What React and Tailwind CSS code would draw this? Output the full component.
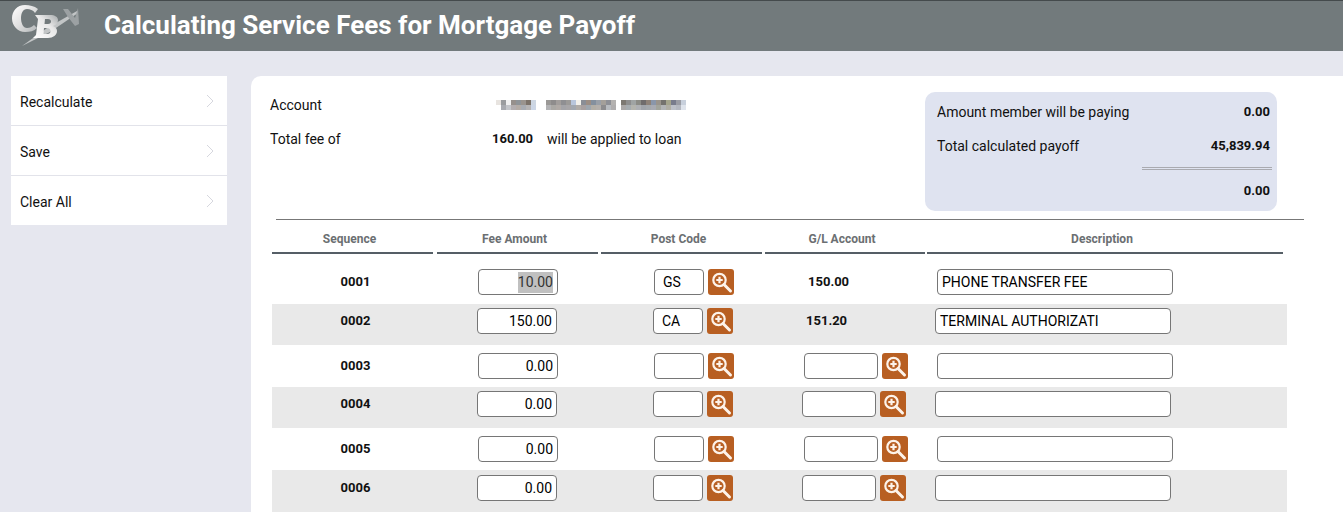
import React from 'react'

const menuItems = ['Recalculate', 'Save', 'Clear All']

const columns = [
    { label: 'Sequence', className: 'w-[161px] mr-[4px]' },
    { label: 'Fee Amount', className: 'w-[161px] mr-[3px]' },
    { label: 'Post Code', className: 'w-[161px] mr-[3px]' },
    { label: 'G/L Account', className: 'w-[160px] mr-[2px]' },
    { label: 'Description', className: 'w-[356px]' },
]

const rows = [
    { seq: '0001', fee: '10.00', code: 'GS', gl: '150.00', desc: 'PHONE TRANSFER FEE', selected: true },
    { seq: '0002', fee: '150.00', code: 'CA', gl: '151.20', desc: 'TERMINAL AUTHORIZATI' },
    { seq: '0003', fee: '0.00', code: '', gl: '', desc: '' },
    { seq: '0004', fee: '0.00', code: '', gl: '', desc: '' },
    { seq: '0005', fee: '0.00', code: '', gl: '', desc: '' },
    { seq: '0006', fee: '0.00', code: '', gl: '', desc: '' },
]

const rowStyles = [
    'h-[50px] pt-[15px]',
    'h-[41px] pt-[4px] bg-[#e9e9e9]',
    'h-[42px] pt-[8px]',
    'h-[41px] pt-[4px] bg-[#e9e9e9]',
    'h-[42px] pt-[8px]',
    'h-[42px] pt-[5px] bg-[#e9e9e9]',
]

// redacted account number, two rows of blurred blocks
const mosaicShort = [
    ['#e8e4e0', '#9a9c9e', '#f0f0f0', '#96908c', '#8f9498', '#9a948e', '#7c736a', '#cdd6e2'],
    ['#ffffff', '#a9abb0', '#c4c6ca', '#b3aeb0', '#b4aca6', '#a8acb2', '#b6b4b4', '#ccd6e6'],
]

const mosaicLong = [
    ['#9a9896', '#8e8c8c', '#a29e9c', '#8f8f92', '#9c9a98', '#b8c6dc', '#f2f0ea', '#8a8e96', '#9c8e84', '#84909e', '#9aa0a8', '#a4a09a', '#8e9096', '#b4b2b0', '#ffffff', '#7c7872', '#8e8e8e', '#a0a4a4', '#8c8c86', '#6f6c6c', '#8e8278', '#8a96aa', '#9a948c', '#74726e', '#a4a48c', '#787c8c', '#9a9ca4', '#c8d0dc'],
    ['#b2b2b4', '#aaa8a4', '#b0aaa6', '#a4a4a8', '#a8a6a8', '#a2a8b0', '#b0aca8', '#a8a0a0', '#9ea6ae', '#b2aea6', '#b4b0ac', '#8c8c8e', '#b8bcc0', '#b0aeae', '#ffffff', '#aaa8a8', '#a6acb0', '#b4b4ae', '#aeb0b4', '#a0a4aa', '#a4a8ac', '#a8aab2', '#a2a49c', '#b2b4b6', '#b0aea4', '#bcc0c8', '#b4b8c0', '#dfe4ec'],
]

const Logo = () => (
    <svg width="85" height="50" viewBox="0 0 85 50" className="shrink-0">
        <defs>
            <linearGradient id="cb" x1="0" y1="0" x2="1" y2="1">
                <stop offset="0" stopColor="#ffffff" />
                <stop offset="0.5" stopColor="#e0e0e0" />
                <stop offset="1" stopColor="#b0b4b6" />
            </linearGradient>
            <linearGradient id="bb" x1="0" y1="1" x2="1" y2="0">
                <stop offset="0" stopColor="#ffffff" />
                <stop offset="0.6" stopColor="#e8e8e8" />
                <stop offset="1" stopColor="#a6aaac" />
            </linearGradient>
        </defs>
        <path d="M17 45 L42 27 L72 10 L73 12 L45 31 Z" fill="#c2c5c6" />
        <path d="M58 8 L63 8 L70 17 L73 7 L74 23 L70 25 L63 16 Z" fill="#9ca1a3" />
        <path d="M33 8 C29 5 25 4 20 4 C12 4 7 10 7 17.500 C7 25 13 31 20 31 C25 31 29 30 32 27 L29 24 C27 26 25 27 22 27 C18 27 16 22 16 17 C16 12 18 8 22 8 C25 8 28 9 30 12 Z" fill="url(#cb)" />
        <path fillRule="evenodd" d="M30 14 L45 14 C50 14 53 16 53 19 C53 22 51 24 48 25 C51 26 52 28 52 30 C52 34 48 37 43 37 L28 37 L31 34 L33 18 Z M40 18 L39.500 23 L43 23 C45 23 46 22 46 20.500 C46 19 45 18 43 18 Z M39 27 L38.500 33 L42 33 C44.500 33 45.500 32 45.500 30 C45.500 28 44 27 42 27 Z" fill="url(#bb)" />
    </svg>
)

const Mosaic = ({ cols }) => (
    <svg width={cols[0].length * 5} height="10" className="block" shapeRendering="crispEdges">
        {cols.map((line, y) => line.map((fill, x) => (
            <rect key={`${x}-${y}`} x={x * 5} y={y * 5} width="5" height="5" fill={fill} />
        )))}
    </svg>
)

const SearchButton = () => (
    <button type="button" className="flex h-[26px] w-[26px] shrink-0 items-center justify-center rounded-[3px] bg-[#b85f22]">
        <svg width="26" height="26" viewBox="0 0 26 26" fill="none" stroke="#fdf3ea">
            <circle cx="11.500" cy="11" r="6.200" strokeWidth="2.200" />
            <path d="M16 15.500 L22.500 22" strokeWidth="3" strokeLinecap="round" />
            <path d="M11.500 7.800 V14.200 M8.300 11 H14.700" strokeWidth="2.200" />
        </svg>
    </button>
)

const TextBox = ({ value, className }) => (
    <div className={`flex h-[26px] items-center overflow-hidden rounded-[4px] border border-[#767676] bg-white text-[14px] text-black ${className}`}>
        {value}
    </div>
)

const FeeRow = ({ row, index }) => {
    const even = index % 2 === 0
    return (
        <div className={`flex w-[1015px] items-start ${rowStyles[index]}`}>
            <div className="flex h-[26px] w-[165px] items-center justify-center pl-[2px] text-[13px] font-bold">{row.seq}</div>
            <div className={`flex w-[164px] ${even ? 'pl-[41px]' : 'pl-[40px]'}`}>
                <TextBox className="w-[80px] justify-end pr-[4px]" value={row.selected ? <span className="bg-[#c0c0c0] text-[#333]">{row.fee}</span> : row.fee} />
            </div>
            <div className={`flex w-[164px] gap-[4px] ${even ? 'pl-[53px]' : 'pl-[52px]'}`}>
                <TextBox className="w-[50px] pl-[8px]" value={row.code} />
                <SearchButton />
            </div>
            <div className={`flex w-[162px] gap-[4px] ${even ? 'pl-[39px]' : 'pl-[37px]'}`}>
                {row.gl ? (
                    <div className="flex h-[26px] items-center pl-[4px] text-[13px] font-bold">{row.gl}</div>
                ) : (
                    <>
                        <TextBox className="w-[74px]" value="" />
                        <SearchButton />
                    </>
                )}
            </div>
            <div className={even ? 'pl-[10px]' : 'pl-[8px]'}>
                <TextBox className="w-[236px] pl-[4px]" value={row.desc} />
            </div>
        </div>
    )
}

export default function App() {
    return (
        <div className="flex h-[512px] w-[1343px] flex-col overflow-hidden bg-[#e6e7ef] font-['Roboto',sans-serif] text-[#111]">
            <header className="flex h-[51px] shrink-0 items-center border-t border-[#444a4c] bg-[#727a7c] pl-[5px]">
                <Logo />
                <h1 className="ml-[14px] pb-[2px] text-[26px] font-bold text-white">Calculating Service Fees for Mortgage Payoff</h1>
            </header>

            <div className="flex flex-1 items-start pt-[25px]">
                <nav className="ml-[11px] w-[216px] bg-white">
                    {menuItems.map((item, i) => (
                        <div key={item} className={`flex items-center justify-between pl-[9px] pr-[13px] text-[14px] ${i < 2 ? 'h-[50px] border-b border-[#e2e3ea]' : 'h-[49px]'}`}>
                            <span className="pt-[4px]">{item}</span>
                            <svg width="8" height="14" viewBox="0 0 8 14" fill="none" stroke="#d6d7de" strokeWidth="1">
                                <path d="M1 1 L7 7 L1 13" />
                            </svg>
                        </div>
                    ))}
                </nav>

                <main className="ml-[24px] h-[436px] flex-1 rounded-tl-[10px] bg-white">
                    <div className="ml-[25px] mr-[39px] flex h-[144px] border-b border-[#777]">
                        <div className="-ml-[6px] w-[655px] pt-[21px] text-[14px]">
                            <div className="flex h-[16px] items-center">
                                <span className="w-[226px]">Account</span>
                                <Mosaic cols={mosaicShort} />
                                <span className="w-[10px]" />
                                <Mosaic cols={mosaicLong} />
                            </div>
                            <div className="mt-[18px] flex h-[16px] items-center">
                                <span className="w-[222px]">Total fee of</span>
                                <span className="w-[41px] text-right text-[13px] font-bold">160.00</span>
                                <span className="ml-[14px]">will be applied to loan</span>
                            </div>
                        </div>
                        <div className="mt-[16px] h-[119px] w-[352px] rounded-[10px] bg-[#dfe3f0] pl-[12px] pr-[7px] pt-[12px] text-[14px]">
                            <div className="flex h-[16px] items-center justify-between">
                                <span>Amount member will be paying</span>
                                <span className="text-[13px] font-bold">0.00</span>
                            </div>
                            <div className="mt-[18px] flex h-[16px] items-center justify-between">
                                <span>Total calculated payoff</span>
                                <span className="text-[13px] font-bold">45,839.94</span>
                            </div>
                            <div className="ml-[205px] mr-[-2px] mt-[13px] h-[3px] border-y border-[#a9aab0]" />
                            <div className="mt-[13px] flex h-[16px] items-center justify-end text-[13px] font-bold">0.00</div>
                        </div>
                    </div>

                    <div className="ml-[21px]">
                        <div className="flex h-[34px]">
                            {columns.map(col => (
                                <div key={col.label} className={`flex h-[34px] items-center justify-center border-b-2 border-[#555e66] pr-[6px] pt-[6px] text-[12px] font-bold text-[#6b6f72] ${col.className}`}>
                                    {col.label}
                                </div>
                            ))}
                        </div>
                        {rows.map((row, i) => (
                            <FeeRow key={row.seq} row={row} index={i} />
                        ))}
                    </div>
                </main>
            </div>
        </div>
    )
}
